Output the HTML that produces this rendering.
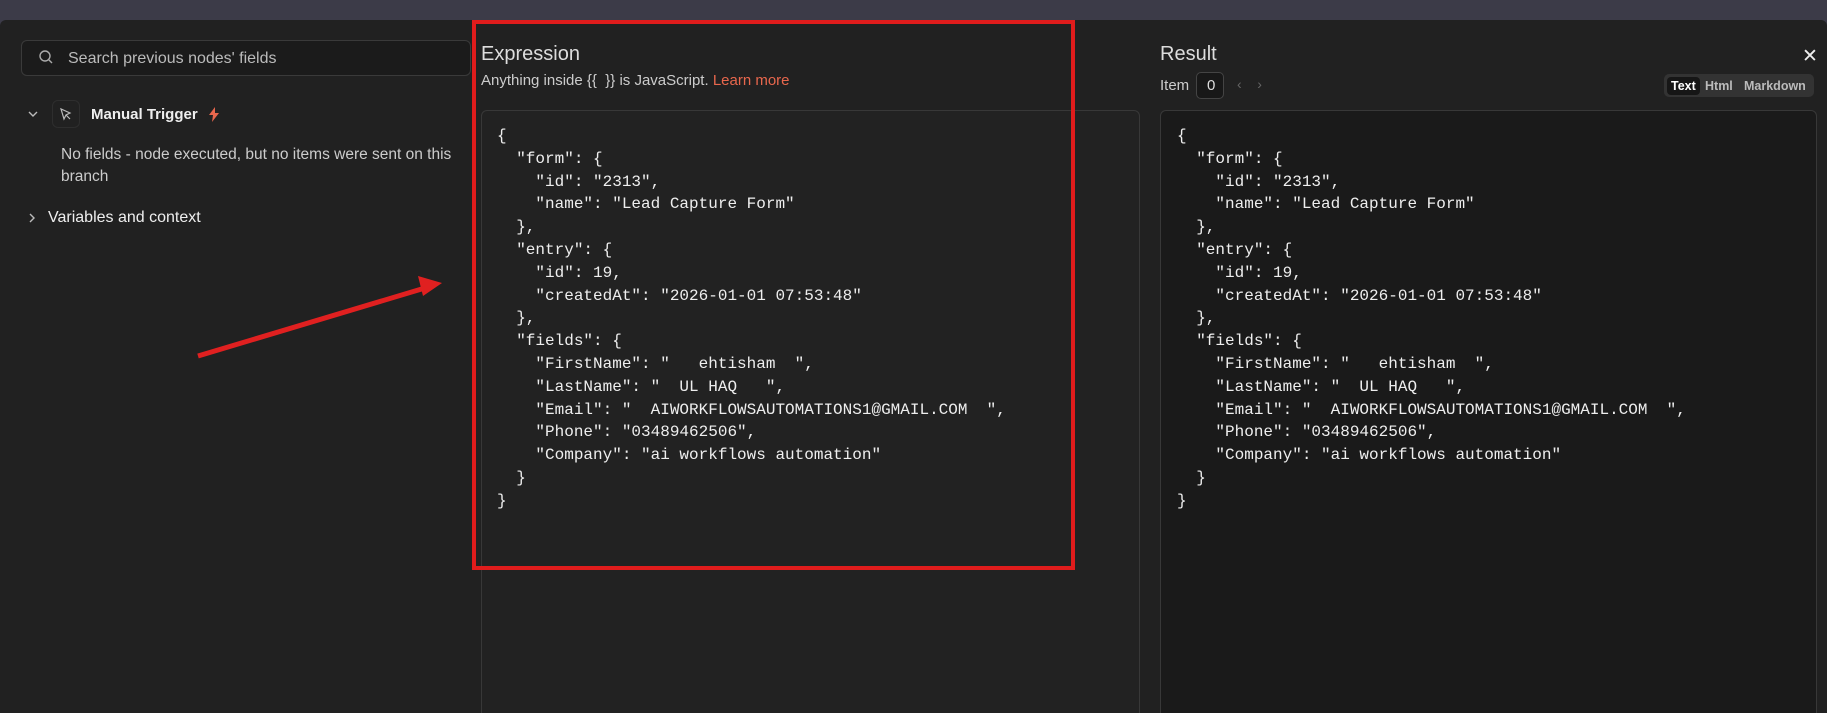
<!DOCTYPE html>
<html><head><meta charset="utf-8"><style>
*{box-sizing:border-box;margin:0;padding:0}
html,body{width:1827px;height:713px;overflow:hidden}
body{background:#3c3b48;font-family:"Liberation Sans",sans-serif;color:#ddd;position:relative}
.modal{position:absolute;left:0;top:20px;width:1827px;height:693px;background:#212121;border-radius:6px 6px 0 0}
.abs{position:absolute}
.search{left:21px;top:40px;width:450px;height:36px;border:1px solid #3a3a3a;border-radius:6px;background:#1b1b1b;font-size:16px;color:#bbb;padding:9px 0 0 46px}
.code{font-family:"Liberation Mono",monospace;font-size:16px;line-height:22.8px;white-space:pre;color:#eee}
.box{border:1px solid #383838;border-radius:6px}
</style></head><body>
<div class="modal"></div>
<div class="abs search">Search previous nodes' fields</div>
<svg class="abs" style="left:38px;top:49px" width="16" height="16" viewBox="0 0 16 16" fill="none" stroke="#aaa" stroke-width="1.4"><circle cx="7" cy="7" r="5"/><path d="M11 11l3 3"/></svg>
<svg class="abs" style="left:27px;top:109px" width="12" height="10" viewBox="0 0 12 10" fill="none" stroke="#bbb" stroke-width="1.4"><path d="M2 3l4 4 4-4"/></svg>
<div class="abs" style="left:52px;top:100px;width:28px;height:28px;border:1px solid #2e2e2e;border-radius:6px"></div>
<svg class="abs" style="left:58px;top:106px" width="16" height="16" viewBox="0 0 16 16" fill="none" stroke="#bbb" stroke-width="1.2"><path d="M3 3l3 10 2-4 4-2z M8 9l4 4"/></svg>
<div class="abs" style="left:91px;top:106px;font-size:15px;font-weight:bold;color:#eee">Manual Trigger</div>
<svg class="abs" style="left:208px;top:107px" width="12" height="15" viewBox="0 0 12 15"><path d="M7 0L1 8h4l-1 7 7-9H7z" fill="#e8674d"/></svg>
<div class="abs" style="left:61px;top:144px;font-size:15.5px;line-height:22px;color:#ccc;width:420px">No fields - node executed, but no items were sent on this branch</div>
<svg class="abs" style="left:27px;top:212px" width="10" height="12" viewBox="0 0 10 12" fill="none" stroke="#bbb" stroke-width="1.4"><path d="M3 2l4 4-4 4"/></svg>
<div class="abs" style="left:48px;top:209px;font-size:16px;color:#eee">Variables and context</div>
<svg class="abs" style="left:0;top:0" width="1827" height="713"><line x1="198" y1="356" x2="425" y2="288" stroke="#e02020" stroke-width="5"/><path d="M442 283l-24-7 5 20z" fill="#e02020"/></svg>

<div class="abs" style="left:481px;top:43px;font-size:20px;color:#ddd">Expression</div>
<div class="abs" style="left:481px;top:72px;font-size:15px;color:#ccc">Anything inside {{&nbsp; }} is JavaScript. <span style="color:#e8674d">Learn more</span></div>
<div class="abs box" style="left:481px;top:110px;width:659px;height:610px;background:#222"></div>
<div class="abs code" style="left:497px;top:125px">{
  "form": {
    "id": "2313",
    "name": "Lead Capture Form"
  },
  "entry": {
    "id": 19,
    "createdAt": "2026-01-01 07:53:48"
  },
  "fields": {
    "FirstName": "   ehtisham  ",
    "LastName": "  UL HAQ   ",
    "Email": "  AIWORKFLOWSAUTOMATIONS1@GMAIL.COM  ",
    "Phone": "03489462506",
    "Company": "ai workflows automation"
  }
}</div>
<div class="abs" style="left:472px;top:20px;width:603px;height:550px;border:4px solid #e01c1c"></div>

<div class="abs" style="left:1160px;top:43px;font-size:20px;color:#ddd">Result</div>
<div class="abs" style="left:1802px;top:45px;font-size:19px;color:#eee">✕</div>
<div class="abs" style="left:1160px;top:77px;font-size:15px;color:#ccc">Item</div>
<div class="abs" style="left:1196px;top:72px;width:28px;height:27px;border:1px solid #444;border-radius:5px;background:#181818;font-size:15px;padding:4px 0 0 10px">0</div>
<div class="abs" style="left:1237px;top:76px;font-size:14px;color:#666">‹&nbsp;&nbsp;&nbsp;&nbsp;›</div>
<div class="abs" style="left:1664px;top:74px;width:150px;height:23px;background:#333;border-radius:5px;font-size:12.5px;font-weight:bold;color:#bbb">
<span style="position:absolute;left:3px;top:3px;background:#161616;color:#fff;border-radius:4px;padding:2px 4px">Text</span>
<span style="position:absolute;left:41px;top:5px">Html</span>
<span style="position:absolute;left:80px;top:5px">Markdown</span></div>
<div class="abs box" style="left:1160px;top:110px;width:657px;height:610px;background:#1a1a1a"></div>
<div class="abs code" style="left:1177px;top:125px">{
  "form": {
    "id": "2313",
    "name": "Lead Capture Form"
  },
  "entry": {
    "id": 19,
    "createdAt": "2026-01-01 07:53:48"
  },
  "fields": {
    "FirstName": "   ehtisham  ",
    "LastName": "  UL HAQ   ",
    "Email": "  AIWORKFLOWSAUTOMATIONS1@GMAIL.COM  ",
    "Phone": "03489462506",
    "Company": "ai workflows automation"
  }
}</div>
</body></html>
